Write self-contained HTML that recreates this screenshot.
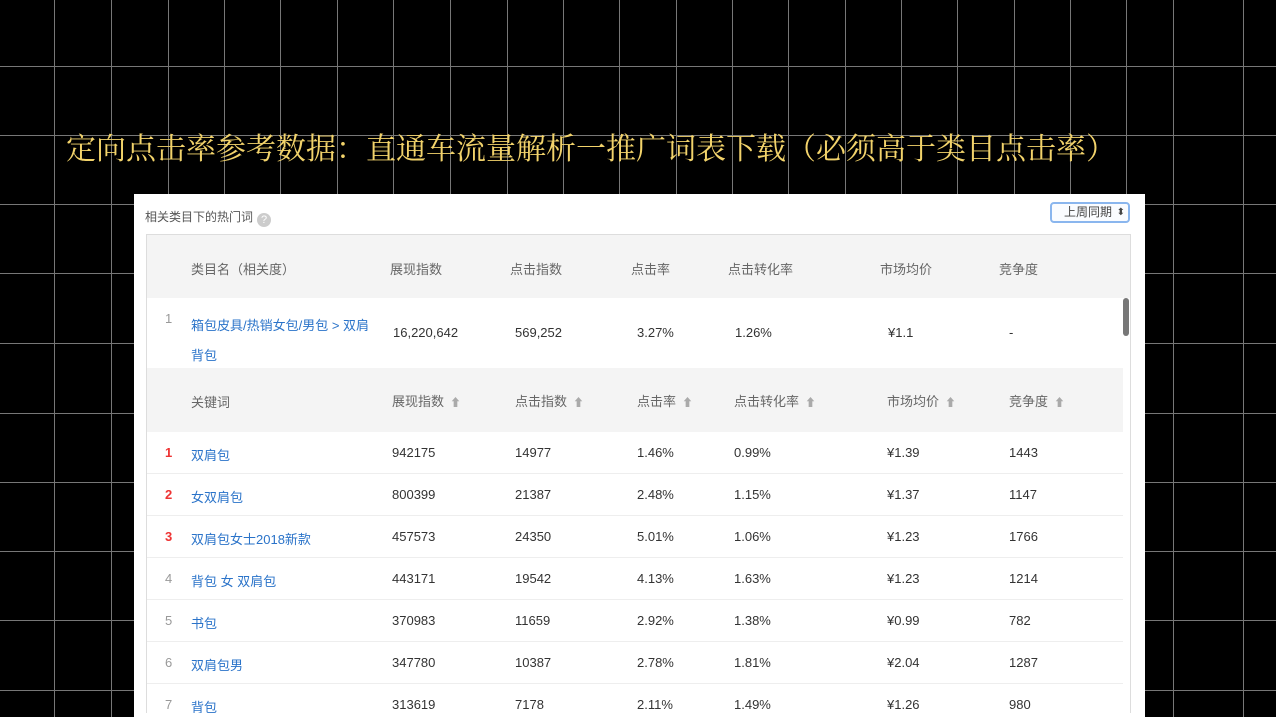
<!DOCTYPE html>
<html><head><meta charset="utf-8"><style>
*{margin:0;padding:0;box-sizing:border-box}
body{width:1276px;height:717px;background:#000;position:relative;overflow:hidden;font-family:"Liberation Sans","Noto Sans CJK SC",sans-serif}
svg.g{position:absolute;left:0;top:0}
.title{position:absolute;left:66px;top:124px;font-family:"Liberation Serif","Noto Serif CJK SC",serif;font-size:30px;color:#f2d36b;white-space:nowrap;letter-spacing:0px}
.box{position:absolute;left:134px;top:194px;width:1011px;height:523px;background:#fff}
.hd{position:absolute;left:11px;top:14px;font-size:12px;color:#555}
.q{display:inline-block;width:14px;height:14px;border-radius:50%;background:#ccc;color:#fff;font-size:11px;text-align:center;line-height:14px;margin-left:4px;vertical-align:-2px}
.sel{position:absolute;left:916px;top:8px;width:80px;height:21px;border:2px solid #8ab6ee;border-radius:4px;font-size:12px;color:#444;text-align:right;padding-right:16px;line-height:17px;background:#fafcff}
.sel:after{content:"⬍";position:absolute;right:3px;top:0;font-size:10px}
.tb{position:absolute;left:12px;top:40px;width:985px;height:479px;border:1px solid #ddd;border-bottom:none;overflow:hidden}
.row{position:absolute;left:0;width:976px;font-size:13px;color:#333}
.row span{position:absolute}
.gray{background:#f4f4f4;color:#666}
.lnk{color:#2a73c9}
.ar{color:#aaa;font-size:11px;margin-left:6px}
.ln{border-bottom:1px solid #eee}
.sb{position:absolute;left:976px;top:63px;width:6px;height:38px;border-radius:3px;background:#777}
</style></head><body>
<svg class="g" width="1276" height="717">
<g stroke="#777" stroke-width="1">
<line x1="54.5" y1="0" x2="54.5" y2="717"/><line x1="111.5" y1="0" x2="111.5" y2="717"/><line x1="168.5" y1="0" x2="168.5" y2="717"/><line x1="224.5" y1="0" x2="224.5" y2="717"/><line x1="280.5" y1="0" x2="280.5" y2="717"/><line x1="337.5" y1="0" x2="337.5" y2="717"/><line x1="393.5" y1="0" x2="393.5" y2="717"/><line x1="450.5" y1="0" x2="450.5" y2="717"/><line x1="507.5" y1="0" x2="507.5" y2="717"/><line x1="563.5" y1="0" x2="563.5" y2="717"/><line x1="619.5" y1="0" x2="619.5" y2="717"/><line x1="676.5" y1="0" x2="676.5" y2="717"/><line x1="732.5" y1="0" x2="732.5" y2="717"/><line x1="788.5" y1="0" x2="788.5" y2="717"/><line x1="845.5" y1="0" x2="845.5" y2="717"/><line x1="901.5" y1="0" x2="901.5" y2="717"/><line x1="957.5" y1="0" x2="957.5" y2="717"/><line x1="1014.5" y1="0" x2="1014.5" y2="717"/><line x1="1070.5" y1="0" x2="1070.5" y2="717"/><line x1="1126.5" y1="0" x2="1126.5" y2="717"/><line x1="1173.5" y1="0" x2="1173.5" y2="717"/><line x1="1243.5" y1="0" x2="1243.5" y2="717"/>
<line x1="0" y1="66.5" x2="1276" y2="66.5"/><line x1="0" y1="135.5" x2="1276" y2="135.5"/><line x1="0" y1="204.5" x2="1276" y2="204.5"/><line x1="0" y1="273.5" x2="1276" y2="273.5"/><line x1="0" y1="343.5" x2="1276" y2="343.5"/><line x1="0" y1="413.5" x2="1276" y2="413.5"/><line x1="0" y1="482.5" x2="1276" y2="482.5"/><line x1="0" y1="551.5" x2="1276" y2="551.5"/><line x1="0" y1="620.5" x2="1276" y2="620.5"/><line x1="0" y1="690.5" x2="1276" y2="690.5"/>
</g></svg>
<div class="title">定向点击率参考数据：直通车流量解析一推广词表下载（必须高于类目点击率）</div>
<div class="box">
<div class="hd">相关类目下的热门词<span class="q">?</span></div>
<div class="sel">上周同期</div>
<div class="tb">
<div class="row gray" style="top:0;height:63px;width:983px"><span style="left:44px;top:24px">类目名（相关度）</span><span style="left:243px;top:24px">展现指数</span><span style="left:363px;top:24px">点击指数</span><span style="left:484px;top:24px">点击率</span><span style="left:581px;top:24px">点击转化率</span><span style="left:733px;top:24px">市场均价</span><span style="left:852px;top:24px">竞争度</span></div>
<div class="row" style="top:63px;height:70px"><span style="left:18px;top:13px;color:#999">1</span><span class="lnk" style="left:44px;top:13px;line-height:30px">箱包皮具/热销女包/男包 &gt; 双肩<br>背包</span><span style="left:246px;top:27px">16,220,642</span><span style="left:368px;top:27px">569,252</span><span style="left:490px;top:27px">3.27%</span><span style="left:588px;top:27px">1.26%</span><span style="left:741px;top:27px">¥1.1</span><span style="left:862px;top:27px">-</span></div>
<div class="sb"></div>
<div class="row gray" style="top:133px;height:64px"><span style="left:44px;top:24px">关键词</span><span style="left:245px;top:23px">展现指数<b class="ar">⬆</b></span><span style="left:368px;top:23px">点击指数<b class="ar">⬆</b></span><span style="left:490px;top:23px">点击率<b class="ar">⬆</b></span><span style="left:587px;top:23px">点击转化率<b class="ar">⬆</b></span><span style="left:740px;top:23px">市场均价<b class="ar">⬆</b></span><span style="left:862px;top:23px">竞争度<b class="ar">⬆</b></span></div>
<div class="row ln" style="top:197px;height:42px"><span style="left:18px;top:13px;color:#e33;font-weight:bold">1</span><span class="lnk" style="left:44px;top:13px">双肩包</span><span style="left:245px;top:13px">942175</span><span style="left:368px;top:13px">14977</span><span style="left:490px;top:13px">1.46%</span><span style="left:587px;top:13px">0.99%</span><span style="left:740px;top:13px">¥1.39</span><span style="left:862px;top:13px">1443</span></div>
<div class="row ln" style="top:239px;height:42px"><span style="left:18px;top:13px;color:#e33;font-weight:bold">2</span><span class="lnk" style="left:44px;top:13px">女双肩包</span><span style="left:245px;top:13px">800399</span><span style="left:368px;top:13px">21387</span><span style="left:490px;top:13px">2.48%</span><span style="left:587px;top:13px">1.15%</span><span style="left:740px;top:13px">¥1.37</span><span style="left:862px;top:13px">1147</span></div>
<div class="row ln" style="top:281px;height:42px"><span style="left:18px;top:13px;color:#e33;font-weight:bold">3</span><span class="lnk" style="left:44px;top:13px">双肩包女士2018新款</span><span style="left:245px;top:13px">457573</span><span style="left:368px;top:13px">24350</span><span style="left:490px;top:13px">5.01%</span><span style="left:587px;top:13px">1.06%</span><span style="left:740px;top:13px">¥1.23</span><span style="left:862px;top:13px">1766</span></div>
<div class="row ln" style="top:323px;height:42px"><span style="left:18px;top:13px;color:#999">4</span><span class="lnk" style="left:44px;top:13px">背包 女 双肩包</span><span style="left:245px;top:13px">443171</span><span style="left:368px;top:13px">19542</span><span style="left:490px;top:13px">4.13%</span><span style="left:587px;top:13px">1.63%</span><span style="left:740px;top:13px">¥1.23</span><span style="left:862px;top:13px">1214</span></div>
<div class="row ln" style="top:365px;height:42px"><span style="left:18px;top:13px;color:#999">5</span><span class="lnk" style="left:44px;top:13px">书包</span><span style="left:245px;top:13px">370983</span><span style="left:368px;top:13px">11659</span><span style="left:490px;top:13px">2.92%</span><span style="left:587px;top:13px">1.38%</span><span style="left:740px;top:13px">¥0.99</span><span style="left:862px;top:13px">782</span></div>
<div class="row ln" style="top:407px;height:42px"><span style="left:18px;top:13px;color:#999">6</span><span class="lnk" style="left:44px;top:13px">双肩包男</span><span style="left:245px;top:13px">347780</span><span style="left:368px;top:13px">10387</span><span style="left:490px;top:13px">2.78%</span><span style="left:587px;top:13px">1.81%</span><span style="left:740px;top:13px">¥2.04</span><span style="left:862px;top:13px">1287</span></div>
<div class="row" style="top:449px;height:42px"><span style="left:18px;top:13px;color:#999">7</span><span class="lnk" style="left:44px;top:13px">背包</span><span style="left:245px;top:13px">313619</span><span style="left:368px;top:13px">7178</span><span style="left:490px;top:13px">2.11%</span><span style="left:587px;top:13px">1.49%</span><span style="left:740px;top:13px">¥1.26</span><span style="left:862px;top:13px">980</span></div>
</div>
</div>
</body></html>
